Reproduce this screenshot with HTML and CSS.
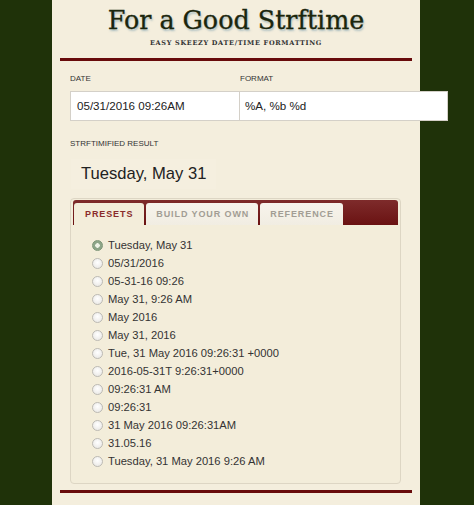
FILE: index.html
```html
<!DOCTYPE html>
<html>
<head>
<meta charset="utf-8">
<link rel="stylesheet" href="styles.css">
</head>
<body>
<div class="page">
  <header class="masthead">
    <h1 class="title">For a Good Strftime</h1>
    <p class="subtitle">EASY SKEEZY DATE/TIME FORMATTING</p>
  </header>
  <div class="rule"></div>
  <div class="form">
    <div class="fields">
      <div class="field field-date">
        <label class="label">DATE</label>
        <div class="input">05/31/2016 09:26AM</div>
      </div>
      <div class="field field-format">
        <label class="label">FORMAT</label>
        <div class="input">%A, %b %d</div>
      </div>
    </div>
    <div class="label result-label">STRFTIMIFIED RESULT</div>
    <div class="result">Tuesday, May 31</div>
    <div class="tabs">
      <div class="tabbar">
        <div class="tab active">PRESETS</div>
        <div class="tab">BUILD YOUR OWN</div>
        <div class="tab">REFERENCE</div>
      </div>
      <ul class="presets">
        <li class="preset"><span class="radio checked"></span>Tuesday, May 31</li>
        <li class="preset"><span class="radio"></span>05/31/2016</li>
        <li class="preset"><span class="radio"></span>05-31-16 09:26</li>
        <li class="preset"><span class="radio"></span>May 31, 9:26 AM</li>
        <li class="preset"><span class="radio"></span>May 2016</li>
        <li class="preset"><span class="radio"></span>May 31, 2016</li>
        <li class="preset"><span class="radio"></span>Tue, 31 May 2016 09:26:31 +0000</li>
        <li class="preset"><span class="radio"></span>2016-05-31T 9:26:31+0000</li>
        <li class="preset"><span class="radio"></span>09:26:31 AM</li>
        <li class="preset"><span class="radio"></span>09:26:31</li>
        <li class="preset"><span class="radio"></span>31 May 2016 09:26:31AM</li>
        <li class="preset"><span class="radio"></span>31.05.16</li>
        <li class="preset"><span class="radio"></span>Tuesday, 31 May 2016 9:26 AM</li>
      </ul>
    </div>
  </div>
  <div class="rule rule-bottom"></div>
</div>
</body>
</html>
```

FILE: styles.css
```css
html, body {
  margin: 0;
  padding: 0;
}
body {
  background: #1f3209;
  font-family: "Liberation Sans", Arial, sans-serif;
  color: #333;
  height: 505px;
  overflow: hidden;
}
.page {
  margin-left: 52px;
  width: 368px;
  min-height: 505px;
  background: #f4eedd;
  padding: 0 8px;
  box-sizing: border-box;
}
.masthead {
  text-align: center;
  padding-top: 5px;
}
.title {
  margin: 0;
  font-family: "DejaVu Serif", "Liberation Serif", serif;
  font-weight: normal;
  font-size: 25.4px;
  line-height: 30px;
  color: #1b260d;
  text-shadow: 1px 2px 2px rgba(110, 150, 170, 0.55);
  -webkit-text-stroke: 0.3px #1b260d;
}
.subtitle {
  margin: 3px 0 0;
  font-family: "DejaVu Serif", "Liberation Serif", serif;
  font-weight: bold;
  font-size: 6.5px;
  letter-spacing: 0.7px;
  line-height: 10px;
  color: #333;
}
.rule {
  margin-top: 10px;
  height: 3px;
  background: #680b0b;
}
.rule-bottom {
  margin-top: 6px;
}
.form {
  padding: 0 0 0 10px;
}
.fields {
  display: flex;
  margin-top: 13px;
}
.field-date { width: 170px; flex: none; }
.field-format { width: 208px; flex: none; }
.label {
  display: block;
  font-size: 8px;
  line-height: 10px;
  color: #333;
  margin-bottom: 7px;
}
.input {
  height: 28px;
  background: #fff;
  border: 1px solid #d4d0c8;
  font-size: 11.6px;
  line-height: 28px;
  padding-left: 6px;
  color: #222;
}
.field-format .input {
  border-left: none;
  padding-left: 5px;
}
.result-label {
  margin-top: 18px;
  margin-bottom: 0;
}
.result {
  display: inline-block;
  margin: 10px 0 0 1px;
  height: 30px;
  line-height: 30px;
  padding: 0 10px;
  font-size: 16.6px;
  color: #222;
  background: #f5efdf;
}
.tabs {
  margin-top: 9px;
  width: 331px;
  box-sizing: border-box;
  border: 1px solid #ddd6c4;
  border-radius: 4px;
  padding: 1px 2px 0;
  background: #f3edda;
}
.tabbar {
  display: flex;
  gap: 2px;
  height: 25px;
  padding: 3px 0 0 1px;
  box-sizing: border-box;
  background: linear-gradient(#7e2b2b, #6a1212);
  border-radius: 3px 3px 0 0;
}
.tab {
  height: 22px;
  line-height: 22px;
  background: linear-gradient(#f7f4ec, #f1ede2);
  border-radius: 3px 3px 0 0;
  font-size: 9px;
  font-weight: bold;
  letter-spacing: 0.9px;
  color: #a29d94;
  padding: 0 9px 0 10px;
}
.tab.active {
  color: #8a2b2b;
  background: #f3edda;
  padding: 0 11px 0 11px;
}
.presets {
  list-style: none;
  margin: 0;
  padding: 11px 0 13px 19px;
}
.preset {
  display: flex;
  align-items: center;
  height: 18px;
  font-size: 11.2px;
  color: #333;
}
.radio {
  width: 9px;
  height: 9px;
  border-radius: 50%;
  border: 1px solid #bcbab4;
  background: radial-gradient(circle at 50% 40%, #ffffff, #e6e4e0);
  margin-right: 5px;
  flex: none;
}
.radio.checked {
  border-color: #7d9678;
  background: radial-gradient(circle, #eef2e6 0 2px, #8da588 2.5px);
}
```
